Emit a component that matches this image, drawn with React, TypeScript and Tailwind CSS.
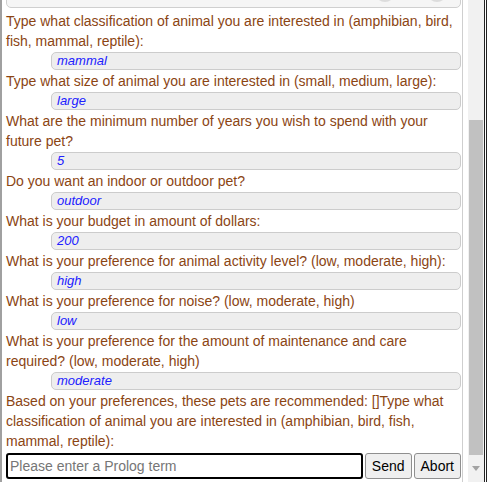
import React from 'react';

type Item = { q: string; a?: string };

const items: Item[] = [
  { q: 'Type what classification of animal you are interested in (amphibian, bird, fish, mammal, reptile):', a: 'mammal' },
  { q: 'Type what size of animal you are interested in (small, medium, large):', a: 'large' },
  { q: 'What are the minimum number of years you wish to spend with your future pet?', a: '5' },
  { q: 'Do you want an indoor or outdoor pet?', a: 'outdoor' },
  { q: 'What is your budget in amount of dollars:', a: '200' },
  { q: 'What is your preference for animal activity level? (low, moderate, high):', a: 'high' },
  { q: 'What is your preference for noise? (low, moderate, high)', a: 'low' },
  { q: 'What is your preference for the amount of maintenance and care required? (low, moderate, high)', a: 'moderate' },
  { q: 'Based on your preferences, these pets are recommended: []Type what classification of animal you are interested in (amphibian, bird, fish, mammal, reptile):' },
];

export default function App() {
  return (
    <div className="flex h-[482px] w-[487px] overflow-hidden bg-white font-['Liberation_Sans',Arial,sans-serif]">
      {/* runner panel */}
      <div className="flex w-[468px] border-l-2 border-[#a0a0a0] pl-[4px] pr-[5px]">
        <div className="flex w-[457px] flex-col border-r border-[#cfcfcf] pr-[1px]">
          {/* header box, scrolled mostly out of view */}
          <div className="-mt-[24px] flex h-[32px] items-end justify-end gap-[32px] rounded-b-[5px] border border-[#cfcfcf] bg-[#f5f5f5] pr-[13px] pb-[5px]">
            <div className="h-[20px] w-[20px] rounded-full bg-[#dcdcdc]" />
            <div className="h-[20px] w-[20px] rounded-full bg-[#dcdcdc]" />
          </div>

          <div className="mt-[3px] flex flex-col">
            {items.map((it, i) => (
              <div key={i} className="flex flex-col">
                <p className="text-[14px] leading-[20px] text-[#8b4513]">{it.q}</p>
                {it.a && (
                  <div className="my-[1px] ml-[45px] flex h-[18px] items-center rounded-[5px] border border-[#cccccc] bg-[#eeeeee] pl-[5px] text-[13px] italic text-[#2020ff]">
                    {it.a}
                  </div>
                )}
              </div>
            ))}
          </div>

          {/* input row */}
          <div className="mt-[2px] flex h-[26px] gap-[2px]">
            <input
              className="min-w-0 flex-1 rounded-[3px] border-2 border-black px-[2px] text-[14px] text-black outline-none placeholder:text-[#767676]"
              placeholder="Please enter a Prolog term"
            />
            <button className="rounded-[3px] border border-[#8f8f8f] bg-[#efefef] px-[6px] text-[14px] text-black">
              Send
            </button>
            <button className="rounded-[3px] border border-[#8f8f8f] bg-[#efefef] px-[6px] text-[14px] text-black">
              Abort
            </button>
          </div>
        </div>
      </div>

      {/* scrollbar */}
      <div className="flex w-[16px] flex-col bg-[#f1f1f1]">
        <div className="h-[120px]" />
        <div className="mx-[1px] h-[335px] bg-[#c1c1c1]" />
        <div className="flex flex-1 items-center justify-center">
          <svg width="8" height="5" viewBox="0 0 8 5">
            <path d="M0 0h8L4 5z" fill="#a3a3a3" />
          </svg>
        </div>
      </div>
      <div className="w-[3px] border-x border-[#222] bg-white" />
    </div>
  );
}
